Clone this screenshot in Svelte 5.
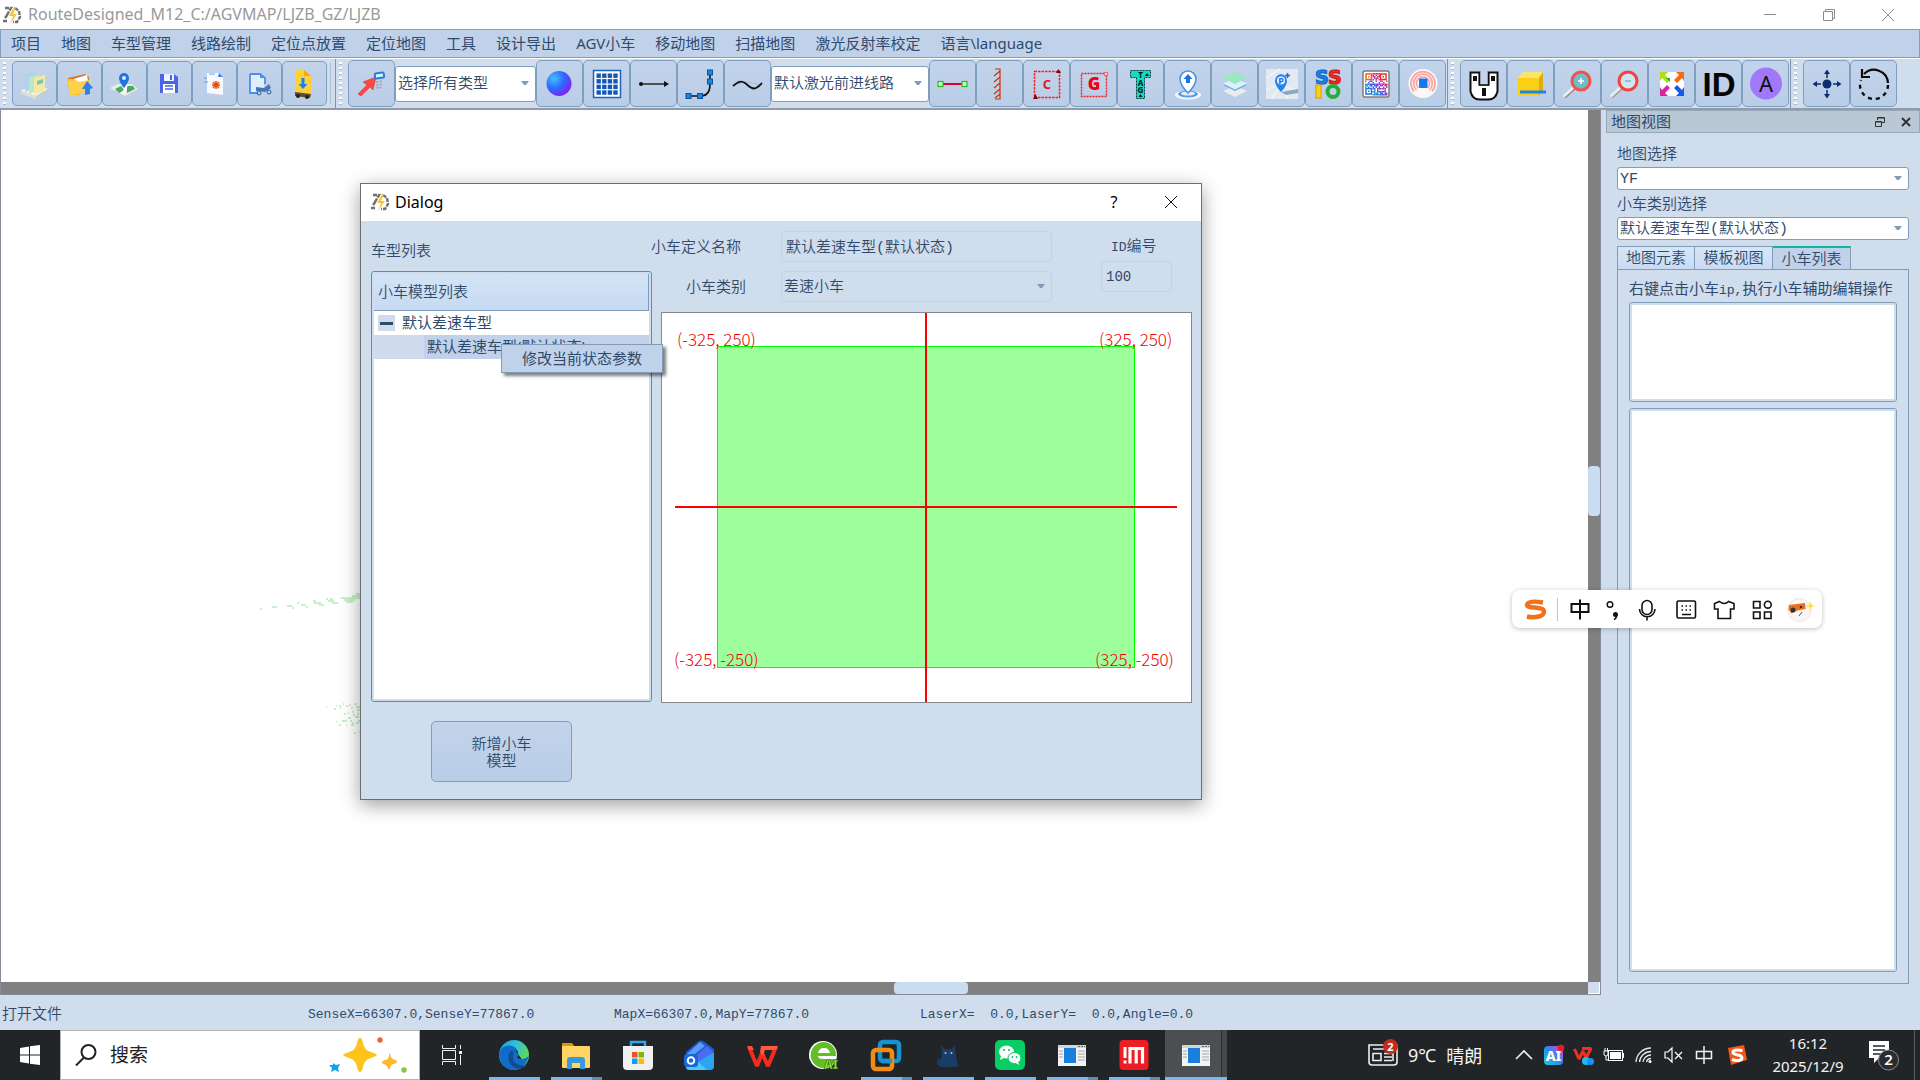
<script lang="ts">
  const menus = ['项目', '地图', '车型管理', '线路绘制', '定位点放置', '定位地图', '工具', '设计导出', 'AGV小车', '移动地图', '扫描地图', '激光反射率校定', '语言\\language'];

  const fileTools = [
    ['打开项目', 'books'], ['打开文件夹', 'folder'], ['打开地图', 'mapPin'], ['保存', 'save'],
    ['激光文件', 'laserFile'], ['车型文件', 'carFile'], ['导出', 'exportFile'],
  ];
  const shapeTools = [['点', 'sphere'], ['网格', 'grid'], ['直线', 'line'], ['折线', 'bend'], ['曲线', 'wave']];
  const mapTools = [
    ['线段', 'segment'], ['反光板', 'hatch'], ['C区域', 'areaC'], ['G区域', 'areaG'], ['标签', 'tag'], ['定位', 'locate'],
    ['图层', 'layers'], ['停车点', 'parking'], ['SSIO', 'ssio'], ['二维码', 'qr'], ['目标', 'target'],
  ];
  const viewTools = [
    ['车体', 'robot'], ['货物', 'box'], ['放大', 'zoomIn'], ['缩小', 'zoomOut'], ['适应窗口', 'fit'], ['编号', 'ident'], ['角度', 'letterA'],
  ];
  const moveTools = [['移动', 'move'], ['旋转', 'rotate']];

  const apps = [
    { name: 'Edge', icon: 'edge', open: 'one' },
    { name: '文件资源管理器', icon: 'explorer', open: 'many' },
    { name: 'Microsoft Store', icon: 'store', open: '' },
    { name: 'Outlook', icon: 'outlook', open: '' },
    { name: 'WPS', icon: 'wps', open: '' },
    { name: '浏览器', icon: 'browser', open: '' },
    { name: 'VMware', icon: 'vmware', open: 'many' },
    { name: '猫', icon: 'cat', open: 'one' },
    { name: '微信', icon: 'wechat', open: 'one' },
    { name: '应用', icon: 'window', open: 'many' },
    { name: 'iM', icon: 'im', open: 'many' },
    { name: 'RouteDesigned', icon: 'window', open: 'active' },
  ];

  const trayIcons = [
    ['显示隐藏的图标', 'chevron'], ['AI', 'ai'], ['WPS云', 'wpsCloud'], ['电池', 'battery'], ['网络', 'wifi'], ['音量', 'mute'], ['输入法', 'zhong'],
  ];

  let grid = '';
  for (let r = 0; r < 4; r++) for (let c = 0; c < 4; c++) grid += `<rect x="${7.5 + c * 5.6}" y="${7.5 + r * 5.6}" width="4.4" height="4.4" fill="#1258b4"/>`;

  let qr = '';
  const qrColors = ['#f4a01c', '#e8402c', '#e02c88', '#9a3cd8', '#3c58e0', '#2890d8', '#28b8a8', '#6ac040'];
  const n = 15;
  for (let r = 0; r < n; r++) for (let c = 0; c < n; c++) {
    const eye = (r < 5 && c < 5) || (r < 5 && c > 9) || (r > 9 && c < 5);
    if (!eye && (r * r * 3 + c * 7 + c * c * r + (r >> 1)) % 7 < 4) {
      qr += `<rect x="${7 + c * 1.5}" y="${7 + r * 1.5}" width="1.5" height="1.5" fill="${qrColors[Math.floor((r + n - c) / 4) % 8]}"/>`;
    }
  }
  qr += '<g fill="none" stroke-width="1.5"><rect x="8" y="8" width="5.500" height="5.500" stroke="#f0641c"/><rect x="22.500" y="8" width="5.500" height="5.500" stroke="#f0302c"/><rect x="8" y="22.500" width="5.500" height="5.500" stroke="#2874d8"/></g><rect x="10" y="10" width="1.500" height="1.500" fill="#f0641c"/><rect x="24.500" y="10" width="1.500" height="1.500" fill="#f0302c"/><rect x="10" y="24.500" width="1.500" height="1.500" fill="#2874d8"/>';

  const icons: Record<string, string> = {
    books: '<path d="M4 25l12-7 15 5-12 7z" fill="#f4f4f0"/><path d="M4 25l15 5v3l-15-5z" fill="#dcdcd8"/><path d="M19 30l12-7v3l-12 7z" fill="#c8ccd0"/><path d="M8 9l10-3v16l-10 4z" fill="#a9d8e8"/><path d="M12 11l10-3v16l-10 4z" fill="#bfe6c4"/><path d="M17 12l11-3v15l-11 5z" fill="#f1e9a4"/><path d="M20 15l6-2v4l-6 2z" fill="#7cc7b0"/>',
    folder: '<path d="M6 12l17-4 4 3v12H7z" fill="#e07820"/><path d="M8 14l17-5 2 12-17 6z" fill="#fff"/><path d="M5 13h7l2 2 3 1 1 13-10 0z" fill="#fbc02c"/><path d="M6 15l2 14 16-3 3-12-11 2-2-2z" fill="#ffd04a"/><path d="M25 15l6 7-3 1 0 5-5 1 0-6-3 0z" fill="#2f80e8"/>',
    mapPin: '<path d="M3 22l8-4 14 0 6 5-13 7z" fill="#e6efe4"/><path d="M8 23l6-3 3 4-5 3zM20 20l6 0 2 3-8 4z" fill="#4ca862"/><path d="M16 28l4-9" stroke="#fff" stroke-width="2"/><path d="M17 7a5 5 0 0 1 5 5c0 4-5 10-5 10s-5-6-5-10a5 5 0 0 1 5-5z" fill="#2474e0"/><circle cx="17" cy="12" r="2" fill="#d8ecff"/>',
    save: '<path d="M8 8h14l4 3v16H8z" fill="#4a64e8"/><rect x="12" y="8" width="10" height="7" fill="#eef2ff"/><rect x="18" y="9" width="2" height="5" fill="#4a64e8"/><rect x="11" y="18" width="12" height="9" fill="#fff"/><path d="M13 20h8M13 23h8" stroke="#4a64e8" stroke-width="1.500"/>',
    laserFile: '<path d="M10 7h12l4 4v18l-16-2z" fill="#f6f9ff"/><path d="M22 7l4 4h-5z" fill="#2f86f0"/><path d="M12 8h6M7 16h4M7 12h3" stroke="#5aa2f4"/><g stroke="#f0702c" stroke-width="2"><path d="M19 15v8M15 19h8M16 16l6 6M22 16l-6 6"/></g><circle cx="19" cy="19" r="2" fill="#d84a20"/>',
    carFile: '<path d="M8 8h10l5 4v6M8 8v19h8" fill="#e2edfc" stroke="#4a8ef0" stroke-width="1.800"/><path d="M9 9h9l4 4v13H9z" fill="#e2edfc"/><path d="M18 7l5 5h-5z" fill="#4a8ef0"/><path d="M14 21l8 1 5-4 2 4-6 4-9-1z" fill="#4676b8"/><circle cx="17" cy="27" r="2" fill="none" stroke="#3d5f96"/><circle cx="27" cy="26" r="2" fill="none" stroke="#3d5f96"/>',
    exportFile: '<path d="M9 4h8l7 6v18H9z" fill="#ffd03a"/><path d="M17 4l7 6h-7z" fill="#f2a81c"/><path d="M14.500 12h3v6h3l-4.500 5-4.500-5h3z" fill="#1684e8"/><path d="M8 26l16 2-1 4-15-2z" fill="#5c4d3e"/><circle cx="11" cy="30" r="2" fill="#222"/><circle cx="20" cy="31" r="2" fill="#222"/>',
    redArrow: '<path d="M4 28l9-9-4-3 13-5-3 13-3-3-9 9z" fill="#ff4a44" stroke="#d83434" stroke-width=".6"/><rect x="21" y="7" width="9" height="5" rx="1" fill="#dff" stroke="#2878e0" stroke-width="2" transform="rotate(-8 25 10)"/><g fill="#a4b0bd"><rect x="22" y="15" width="2.500" height="2"/><rect x="25.500" y="14.500" width="2.500" height="2"/><rect x="22" y="18" width="2.500" height="2"/><rect x="25.500" y="17.500" width="2.500" height="2"/><rect x="22" y="21" width="6" height="1.500"/></g>',
    sphere: '<circle cx="17" cy="17.500" r="12.500" fill="url(#gSphere)"/>',
    grid: `<rect x="4.500" y="4.500" width="27" height="27" fill="#fff" stroke="#1d64bc" stroke-width="1.500"/>${grid}`,
    line: '<path d="M5 18h25" stroke="#333" stroke-width="1.600"/><circle cx="5" cy="18" r="2" fill="#111"/><path d="M28 15l5 3-5 3z" fill="#111"/>',
    bend: '<path d="M7 30h11c7 0 9-5 9-12V6" fill="none" stroke="#111" stroke-width="1.600"/><g fill="#1788e0" stroke="#0a4fa0"><rect x="24.500" y="4" width="5" height="5"/><rect x="24.500" y="13" width="5" height="5"/><rect x="3" y="27.500" width="5" height="5"/><rect x="14.500" y="27.500" width="5" height="5"/></g>',
    wave: '<path d="M8 18q10-4 21 1" fill="none" stroke="#a9b6c4" stroke-width=".8"/><path d="M3 20c5-4 8-6 12-3s7 7 11 5 4-3 6-5" fill="none" stroke="#111" stroke-width="1.800"/>',
    segment: '<path d="M7 18h20" stroke="#e00030" stroke-width="2"/><g fill="#dfeedd" stroke="#12cc12" stroke-width="1.200"><rect x="3" y="15.500" width="5" height="5"/><rect x="27" y="15.500" width="5" height="5"/></g>',
    hatch: '<path d="M13 3h5v30h-5M18 5l-6 5M18 11l-6 5M18 17l-6 5M18 23l-6 5M18 28l-5 4" fill="none" stroke="#cc3300" stroke-width="1.200"/>',
    areaC: '<rect x="5.500" y="5.500" width="25" height="26" fill="none" stroke="#f02020" stroke-width="1.500" stroke-dasharray="2.500 1"/><path d="M27 7h5l-2.500-4zM4 33h5l-2.500-5z" fill="#800010"/><text x="18" y="23" text-anchor="middle" font-family="Noto Sans" font-weight="700" font-size="13" fill="#e01818">C</text>',
    areaG: '<rect x="5.500" y="7.500" width="25" height="23" fill="none" stroke="#f02020" stroke-width="1.400" stroke-dasharray="2 1"/><circle cx="30" cy="8" r="1.800" fill="#f6dfe4" stroke="#f02020" stroke-width=".7"/><text x="18" y="24" text-anchor="middle" font-family="Noto Sans" font-weight="900" font-size="17" fill="#f00010">G</text>',
    tag: '<path d="M7.500 4.500h20v7h-6v21h-8v-21h-6z" fill="#12dcc8" stroke="#063c3c" stroke-dasharray="2 1"/><g font-family="Noto Sans" font-weight="800" font-size="8" text-anchor="middle" fill="#022"><text x="17.500" y="12">T</text><text x="17.500" y="19.500">A</text><text x="17.500" y="27">G</text></g><path d="M22 10l2-3 2 3zM15.500 31l2-3 2 3z" fill="#022"/>',
    locate: '<ellipse cx="18" cy="29" rx="13" ry="4.500" fill="#f4f8fd"/><ellipse cx="18" cy="28" rx="10" ry="3.500" fill="#5c9bea"/><ellipse cx="18" cy="27.500" rx="7" ry="2" fill="#e2eefc"/><path d="M18 5a8 8 0 0 1 8 8c0 6-8 14-8 14s-8-8-8-14a8 8 0 0 1 8-8z" fill="#fff" stroke="#4c92e8" stroke-width="1.600"/><path d="M18 8l4.500 5H20v4h-4v-4h-2.500z" fill="#1c72e0"/>',
    layers: '<path d="M6 25l12-5 12 5-12 6z" fill="#eeece6"/><path d="M6 19l12-5 12 5-12 6z" fill="#5cb4e8"/><path d="M6 17.500l12-5 12 5-12 6z" fill="#dcf0fb"/><path d="M6 12l12-6 12 6-12 6z" fill="#9ae8c0"/>',
    parking: '<rect x="2" y="3" width="32" height="30" fill="#e2e9f1"/><path d="M2 24l12-5 20 5M8 33l8-14 8 14M2 12l14-9" stroke="#eef3f8" stroke-width="1.600" fill="none"/><path d="M17 26l17-3v4l-12 2z" fill="#8ea6c2"/><path d="M17 8a7 7 0 0 1 6 7c0 5-6 11-6 11s-6-6-6-11a7 7 0 0 1 6-7z" fill="#2484f0"/><circle cx="17" cy="14.500" r="4" fill="#eaf4ff"/><text x="17" y="18" text-anchor="middle" font-family="Noto Sans" font-weight="700" font-size="9" fill="#1c6ce0">P</text><path d="M23.500 7v5M21 9.500h5" stroke="#1c6ce0" stroke-width="1.600"/>',
    ssio: '<g font-family="DejaVu Sans" font-weight="700" font-size="19" stroke-width="1.200"><text x="4" y="17.500" fill="#1684e8" stroke="#1468cc">S</text><text x="17" y="17.500" fill="#f02c20" stroke="#d01c18">S</text></g><rect x="5" y="19" width="5" height="13" fill="#ffd012" stroke="#d0a000"/><circle cx="22" cy="25.500" r="5.500" fill="none" stroke="#26ae34" stroke-width="4"/>',
    qr: `<rect x="5" y="5" width="26" height="26" rx="2" fill="#fff" stroke="#807c7c" stroke-width="1.500"/>${qr}`,
    target: '<circle cx="18" cy="17.500" r="14.500" fill="#fdf8f8"/><g fill="none" stroke="#f6a4a4" stroke-width="1.700"><path d="M9 25.500a12 12 0 1 1 18 0M11.500 24a9.300 9.300 0 1 1 13 0M13.500 22a6.500 6.500 0 1 1 9 0"/></g><rect x="14" y="12.500" width="8.500" height="9.500" rx="1" fill="#1478ee"/>',
    robot: '<path d="M4.500 6.500h9v12h9v-12h9v19q-2 8-9 8h-9q-7 0-9-8z" fill="#fff" stroke="#111" stroke-width="2"/><path d="M13.500 6v13h9V6" fill="#c4d4ea" stroke="#111" stroke-width="1.500"/><rect x="7" y="10" width="4" height="5" fill="#111"/><rect x="25" y="10" width="4" height="5" fill="#111"/><rect x="16" y="22" width="4" height="8" fill="#111"/>',
    box: '<path d="M5 12l5-6h20l-4 6z" fill="#fbe36c"/><path d="M5 12h21v18H5z" fill="#fcd012"/><path d="M26 12l4-6v18l-4 6z" fill="#dcae10"/><path d="M7 24.500h26v3H7z" fill="#1c82ec"/>',
    zoomIn: '<path d="M15 21L4 31" stroke="#eee" stroke-width="4"/><path d="M16 22L5 32" stroke="#888" stroke-width="1.500"/><circle cx="21" cy="15" r="9" fill="#6fbccb" stroke="#f0524c" stroke-width="3"/><path d="M21 12v6M18 15h6" stroke="#fff" stroke-width="1.500"/>',
    zoomOut: '<path d="M15 21L4 31" stroke="#eee" stroke-width="4"/><path d="M16 22L5 32" stroke="#999" stroke-width="1.500"/><circle cx="21" cy="15" r="9" fill="#cfe6f2" stroke="#f4423e" stroke-width="3"/><path d="M18 15h6" stroke="#74b8cc" stroke-width="1.500"/>',
    fit: '<rect x="6" y="6" width="24" height="24" fill="#fff"/><path d="M6 6h8l-3 3 5 5-3 3-5-5-2 3z" fill="#b4dc14"/><path d="M12 12l4 4v-4z" fill="#22b040"/><path d="M30 6h-8l3 3-5 5 3 3 5-5 2 3z" fill="#f46a14"/><path d="M6 30h8l-3-3 5-5-3-3-5 5-2-3z" fill="#d826a0"/><path d="M30 30h-8l3-3-5-5 3-3 5 5 2-3z" fill="#1858ee"/>',
    ident: '<text x="18" y="29.500" text-anchor="middle" font-family="Liberation Sans" font-weight="700" font-size="33" fill="#050505">ID</text>',
    letterA: '<circle cx="18" cy="17.500" r="16" fill="#a078fa"/><text x="18" y="26" text-anchor="middle" font-family="Noto Sans" font-size="22" fill="#111">A</text>',
    move: '<circle cx="18" cy="18" r="4.500" fill="#0c2c70"/><path d="M18 12V7M18 24v5M12 18H7M24 18h5" stroke="#0c2c70" stroke-width="1.500"/><path d="M15 8L18 3.500 21 8zM15 28l3 4.500 3-4.500zM8 15L3.500 18 8 21zM28 15l4.500 3-4.500 3z" fill="#0c2c70"/>',
    rotate: '<path d="M8 8a14 14 0 0 1 24 9" fill="none" stroke="#0a0a0a" stroke-width="2.200"/><path d="M32 19a14 14 0 0 1-28 0 14 14 0 0 1 1-5" fill="none" stroke="#0a0a0a" stroke-width="2.400" stroke-dasharray="4 4"/><path d="M6 3v8h8" fill="none" stroke="#0a0a0a" stroke-width="2.200"/>',

    edge: '<circle cx="18" cy="18" r="15" fill="url(#gEdge)"/><path d="M3.200 17c1-7 8-9.500 13-8 5 1.500 7 6 5.500 9.500-1 1.800.5 3.500 4 3.500 3 0 6-1.500 7-4-.5 8-7 15-15 15C10 33 3 26 3.200 17z" fill="#0f6cc8"/><path d="M15 14c-4 3-4 13 5 17 4 1.500 8 0 10.500-3-6 2-13-1-13.500-7 0-3 .7-4 0-7z" fill="#154a90"/><path d="M19 13c3 1 4 4 2.600 6-1 1.800.5 3.300 4 3" fill="#222629"/>',
    explorer: '<path d="M4 7q0-1 1-1h9l3 4H4z" fill="#e0940c"/><rect x="4" y="9" width="28" height="22" rx="1" fill="#ffd666"/><path d="M9 32v-9q0-3 3-3h12q3 0 3 3v9h-5v-6h-8v6z" fill="#3c98dc"/>',
    store: '<path d="M11 11V5h14v6" fill="none" stroke="#28a8ee" stroke-width="2.500"/><path d="M3 9h30v20q0 4-4 4H7q-4 0-4-4z" fill="#f0f0f0"/><rect x="12" y="15" width="5.500" height="5.500" fill="#f25022"/><rect x="18.500" y="15" width="5.500" height="5.500" fill="#7fba00"/><rect x="12" y="21.500" width="5.500" height="5.500" fill="#00a4ef"/><rect x="18.500" y="21.500" width="5.500" height="5.500" fill="#ffb900"/>',
    outlook: '<path d="M4 15L17 4q2-1 4 0l11 8v17q0 4-4 4H8q-4 0-4-4z" fill="#1a5cd8"/><path d="M5 17L18 5l5 4L8 21z" fill="#5a9cf8"/><path d="M10 22L25 9l6 6-14 12z" fill="#4c6cf0"/><path d="M16 25l16-10v14q0 4-4 4H9z" fill="#2ca4f4"/><path d="M4 30l12-5 9 8H8q-4 0-4-3z" fill="#4cc8fa"/><rect x="2" y="17" width="14" height="13" rx="3" fill="#1668d8"/><circle cx="9" cy="23.500" r="3.300" fill="none" stroke="#fff" stroke-width="2"/>',
    wps: '<path d="M5 10l8 19 5-13 6 13 8-19" fill="none" stroke="#f42c20" stroke-width="4" stroke-linejoin="bevel"/><path d="M17 9h17l-2 4H21l-2 6-3-4z" fill="#ff5a40"/><path d="M3 9h5l2 4H5z" fill="#ff4a34"/>',
    browser: '<circle cx="17" cy="18" r="14" fill="#fff"/><path d="M18 5a13 13 0 1 0 12 17H17q-5 0-5-3h18A13 13 0 0 0 18 5z" fill="#62be26"/><path d="M12 16q1-5 6-5t6 5z" fill="#fff"/><text x="18" y="32" font-family="Noto Sans" font-weight="900" font-size="12" fill="#8ce43c" stroke="#24510c" stroke-width=".5">AI</text>',
    vmware: '<rect x="12" y="5" width="19" height="19" rx="3" fill="none" stroke="#1494d4" stroke-width="4.500"/><rect x="5" y="13" width="19" height="19" rx="3" fill="none" stroke="#f28c14" stroke-width="4.500"/><path d="M14 24h10" stroke="#1494d4" stroke-width="4.500"/>',
    cat: '<path d="M11 8l3 4h8l3-4 1 11 2 9q0 2-2 2H11q-2 0-2-2 0-5 3-9z" fill="#1c3c68"/><path d="M9 28q-2-3 0-6" stroke="#1c3c68" stroke-width="2" fill="none"/><circle cx="15.500" cy="16" r="1" fill="#a8c4e4"/><circle cx="21.500" cy="16" r="1" fill="#a8c4e4"/>',
    wechat: '<rect x="3" y="3" width="30" height="30" rx="5" fill="#08cc64"/><ellipse cx="14.500" cy="15" rx="7.500" ry="6.500" fill="#fff"/><ellipse cx="22.500" cy="21" rx="6.500" ry="5.500" fill="#fff" stroke="#08cc64"/><path d="M9 19l-1 4 4-2zM26 25l1.500 3-4-2z" fill="#fff"/><g fill="#08b45a"><circle cx="12" cy="13" r="1"/><circle cx="17" cy="13" r="1"/><circle cx="20.500" cy="20" r=".9"/><circle cx="24.500" cy="20" r=".9"/></g>',
    window: '<rect x="4" y="8" width="28" height="21" fill="#f3f3f3"/><path d="M4 8h28v3H4z" fill="#d4d4d4"/><rect x="10" y="11" width="12" height="15" fill="#1680dc"/><path d="M5 14h4M5 17h4M5 20h4M24 14h7M24 17h7M24 20h7M24 23h7" stroke="#a4a4a4"/><path d="M24 9.500h2M27 9.500h2M30 9.500h1" stroke="#666"/>',
    im: '<rect x="3.500" y="3" width="29" height="30" rx="4" fill="#f01c24"/><path d="M9 10v11M9 23.500v3" stroke="#fff" stroke-width="3"/><path d="M14 26.500V11.500h12.500v15M20.200 12v14.500" stroke="#fff" stroke-width="3.200" fill="none"/>',

    chevron: '<path d="M10 22l8-8 8 8" fill="none" stroke="#f0f0f0" stroke-width="1.600"/>',
    ai: '<rect x="8" y="9" width="19" height="19" rx="4" fill="url(#gAi)"/><text x="17.500" y="24" text-anchor="middle" font-family="Noto Sans" font-weight="800" font-size="14" fill="#fff">AI</text><circle cx="25" cy="11" r="3.300" fill="#f01828"/>',
    wpsCloud: '<path d="M8.500 12l4.500 10 4-8 3 7 5-9.500h-9" fill="none" stroke="#f03024" stroke-width="3" stroke-linejoin="bevel"/><circle cx="20" cy="24" r="4" fill="#22b8f0"/><circle cx="24.500" cy="24.500" r="3.500" fill="#1890f0"/>',
    battery: '<rect x="12.500" y="13.500" width="14" height="10" fill="none" stroke="#fff"/><rect x="14" y="15" width="11" height="7" fill="#fff"/><path d="M27.500 16v5M8 14v3q0 2 2 2t2-2v-3zM9 11v3M11.500 11v3M10 19v4h3" stroke="#fff" fill="none"/>',
    wifi: '<g fill="none" stroke="#e8e8e8" stroke-width="1.300"><path d="M10 25A15 15 0 0 1 25 11"/><path d="M13.500 25A11.500 11.500 0 0 1 25 14.500"/><path d="M17 25a8 8 0 0 1 8-7"/><path d="M20.500 25a4.500 4.500 0 0 1 4.500-3.500"/></g><circle cx="24" cy="24.500" r="1.500" fill="#fff"/>',
    mute: '<path d="M9 15h3l4-4v14l-4-4H9z" fill="none" stroke="#fff" stroke-width="1.200"/><path d="M19 15l7 7M26 15l-7 7" stroke="#fff" stroke-width="1.200"/>',
    zhong: '<path d="M10.500 14.500h15v7h-15zM18 9v18" fill="none" stroke="#f2f2f2" stroke-width="1.500"/>',
  };

  // point cloud left by the laser scan: x, y, width
  const specks = [
    [260, 608, 2], [272, 606, 5], [287, 605, 5], [292, 607, 2], [297, 602, 2], [301, 604, 5], [306, 606, 2], [313, 600, 3], [314, 602, 7], [319, 604, 5],
    [326, 598, 2], [328, 600, 6], [330, 598, 3], [332, 602, 6], [341, 597, 12], [344, 599, 11], [346, 601, 7], [352, 595, 8], [356, 593, 4], [353, 597, 7],
    [326, 706, 1], [334, 708, 2], [336, 705, 1], [339, 705, 2], [340, 707, 1], [343, 703, 1], [344, 713, 2], [346, 705, 2], [349, 704, 2], [351, 707, 2],
    [354, 703, 3], [356, 706, 4], [357, 709, 3], [352, 711, 2], [348, 712, 1], [353, 714, 2], [348, 717, 3], [355, 716, 4], [357, 713, 2], [350, 720, 2],
    [342, 720, 5], [336, 721, 1], [339, 724, 2], [346, 724, 1], [351, 724, 3], [356, 722, 3], [358, 720, 2], [354, 732, 2], [359, 731, 1], [352, 722, 2],
  ];
</script>

{#snippet pic(name: string)}
  <svg class="pic" viewBox="0 0 36 36" aria-hidden="true">{@html icons[name]}</svg>
{/snippet}

{#snippet logo()}
  <svg class="logo" viewBox="0 0 20 18" aria-hidden="true">
    <path d="M3 2h6l-4 7M1 15h5M3 12l3-4M13 2l4 3 1 6-3 5h-4" fill="none" stroke="#707070" stroke-width="2.400" stroke-dasharray="4 1" />
    <path d="M12 1L7 10h4l-3 8 7-10h-4l3-7z" fill="#f2c640" />
  </svg>
{/snippet}

{#snippet tools(list: string[][])}
  {#each list as [label, icon]}
    <button class="tool" aria-label={label}>{@render pic(icon)}</button>
  {/each}
{/snippet}

{#snippet arrow()}
  <svg class="arrow" viewBox="0 0 8 5" aria-hidden="true"><path d="M0 0h8L5 4H3z" fill="#7f9db9" /></svg>
{/snippet}

<svg class="defs" aria-hidden="true">
  <defs>
    <radialGradient id="gSphere" cx=".3" cy=".3" r=".8"><stop offset="0" stop-color="#45c0ff" /><stop offset=".5" stop-color="#2a6cff" /><stop offset="1" stop-color="#8a18f0" /></radialGradient>
    <linearGradient id="gEdge" x1="0" y1="0" x2="1" y2="0.500"><stop offset="0" stop-color="#1c9ce0" /><stop offset=".5" stop-color="#30c0dc" /><stop offset="1" stop-color="#64dc50" /></linearGradient>
    <linearGradient id="gAi" x1="0" y1="1" x2="1" y2="0"><stop offset="0" stop-color="#14d4d8" /><stop offset=".5" stop-color="#2c88f0" /><stop offset="1" stop-color="#e040d0" /></linearGradient>
  </defs>
</svg>

<div class="desktop">
  <header class="titlebar">
    {@render logo()}
    <h1>RouteDesigned_M12_C:/AGVMAP/LJZB_GZ/LJZB</h1>
    <div class="winbtns">
      <button aria-label="最小化"><svg viewBox="0 0 12 12"><path d="M0 5.500h12" /></svg></button>
      <button aria-label="还原"><svg viewBox="0 0 12 12"><path d="M.5 2.500h9v9h-9zM2.500 2.500v-2h9v9h-2" /></svg></button>
      <button aria-label="关闭"><svg viewBox="0 0 12 12"><path d="M0 0l12 12M12 0L0 12" /></svg></button>
    </div>
  </header>

  <nav class="menubar">
    {#each menus as m}<button>{m}</button>{/each}
  </nav>

  <div class="toolbar">
    <div class="group small">
      <i class="grip"></i>
      {@render tools(fileTools)}
      <i class="sep"></i>
    </div>
    <div class="group">
      <i class="grip"></i>
      {@render tools([['选择', 'redArrow']])}
      <div class="combo tall type"><select aria-label="类型"><option>选择所有类型</option></select>{@render arrow()}</div>
      {@render tools(shapeTools)}
      <div class="combo tall route"><select aria-label="线路"><option>默认激光前进线路</option></select>{@render arrow()}</div>
      {@render tools(mapTools)}
    </div>
    <div class="group">
      <i class="grip"></i>
      {@render tools(viewTools)}
    </div>
    <div class="group last">
      <i class="grip"></i>
      {@render tools(moveTools)}
    </div>
  </div>

  <main>
    <section class="view">
      <div class="canvas"></div>
      <div class="vscroll"><i></i></div>
      <div class="hscroll"><i></i></div>
      <div class="corner"></div>
    </section>

    <aside class="dock">
      <div class="docktitle">
        <h2>地图视图</h2>
        <button aria-label="浮动"><svg viewBox="0 0 12 12"><path d="M3.500 4V1.500h7v5H8M3.500 2h7M1.500 5.500h6v5h-6zM1.500 6h6" /></svg></button>
        <button aria-label="关闭"><svg viewBox="0 0 12 12"><path d="M2 2l8 8M10 2l-8 8" /></svg></button>
      </div>
      <div class="dockbody">
        <label for="map">地图选择</label>
        <div class="combo"><select id="map"><option>YF</option></select>{@render arrow()}</div>
        <label for="kind">小车类别选择</label>
        <div class="combo"><select id="kind"><option>默认差速车型(默认状态)</option></select>{@render arrow()}</div>
        <div class="tabs" role="tablist">
          <button role="tab" aria-selected="false">地图元素</button>
          <button role="tab" aria-selected="false">模板视图</button>
          <button role="tab" aria-selected="true" class="on">小车列表</button>
        </div>
        <div class="panel">
          <p>右键点击小车<span class="mono">ip,</span>执行小车辅助编辑操作</p>
          <div class="list short"></div>
          <div class="list"></div>
        </div>
      </div>
    </aside>
  </main>

  <footer class="status">
    <span>打开文件</span>
    <span class="mono">SenseX=66307.0,SenseY=77867.0</span>
    <span class="mono">MapX=66307.0,MapY=77867.0</span>
    <span class="mono">LaserX=  0.0,LaserY=  0.0,Angle=0.0</span>
  </footer>

  <div class="taskbar">
    <button class="start" aria-label="开始"><svg viewBox="0 0 20 20"><path d="M0 3l9-1.500V9.500H0zM10 1.300L20 0v9.500H10zM0 10.500h9v8L0 17zM10 10.500h10V20l-10-1.300z" fill="#fff" /></svg></button>
    <label class="search">
      <svg class="lens" viewBox="0 0 22 22"><circle cx="13.500" cy="8" r="7" /><path d="M9 13.500L1 21.500" /></svg>
      <input type="text" placeholder="搜索" aria-label="搜索" />
      <svg class="spark" viewBox="0 0 78 36">
        <path d="M31 1q2 0 3 5 1 7 8 9 6 2 6 3t-6 3q-7 2-8 9-1 5-3 5t-3-5q-1-7-8-9-6-2-6-3t6-3q7-2 8-9 1-5 3-5z" fill="#fcc41c" />
        <path d="M60 16q1 0 2 4 1 2 4 3t2 2q0 1-3 2-3 0-4 4t-2 0q-1-3-4-4t-2-2q0-1 3-2 3 0 4-4z" fill="#ffb82c" />
        <path d="M4 26l3 2 4-1-2 4 1 4-4-2-4 2 1-4-3-3 4 0z" fill="#10a4ec" />
        <circle cx="51" cy="3" r="2.700" fill="#ee6430" /><circle cx="75" cy="33" r="2.700" fill="#80c83c" />
      </svg>
    </label>
    <button class="taskview" aria-label="任务视图"><svg viewBox="0 0 20 20"><path d="M.5 0v3.500h13V0M.5 20v-3.500h13V20M.5 5.500h13v9H.5zM18.500 0v4M18.500 10v10" /><path d="M17 6h3v3h-3z" fill="#f0f0f0" stroke="none" /></svg></button>
    {#each apps as a}
      <button class="app {a.open}" aria-label={a.name}>{@render pic(a.icon)}</button>
    {/each}

    <div class="tray">
      <button class="weather">
        <span class="news"><svg viewBox="0 0 30 22"><path d="M1 1h28v17q0 3-3 3H4q-3 0-3-3zM5 5h16M5 9.500h8v7H5zM16 9.500h8M16 13h8M16 16.500h8M25 5v12" /></svg><b>2</b></span>
        <span>9℃</span><span>晴朗</span>
      </button>
      {#each trayIcons as [label, icon]}
        <button class="ti" aria-label={label}>{@render pic(icon)}</button>
      {/each}
      <button class="sogou" aria-label="搜狗输入法"><svg viewBox="0 0 20 20"><path d="M1 3l16-3 3 15-16 5z" fill="#f0581c" /><path d="M15.500 5.500Q6 4 6 7.500c0 3 9 1.500 9 5.500 0 3-6 3-10 1.500" fill="none" stroke="#fff" stroke-width="3" /></svg></button>
      <button class="clock"><span>16:12</span><span>2025/12/9</span></button>
      <button class="notes" aria-label="通知"><svg viewBox="0 0 32 32"><path d="M1 2h20v17H11l-5 5v-5H1z" fill="#fff" /><path d="M5 7h12M5 11h12M5 15h8" stroke="#25292c" stroke-width="1.300" /><circle cx="20.500" cy="21" r="10" fill="#2a2d30" stroke="#8a8c8e" /><text x="20.500" y="26" text-anchor="middle" font-size="15" font-weight="600" fill="#fff">2</text></svg></button>
      <i class="peek"></i>
    </div>
  </div>
</div>

<svg class="cloud" viewBox="250 580 112 160" aria-hidden="true">
  {#each specks as [x, y, w]}<rect {x} {y} width={w} height="2" fill="#c8f0c8" />{/each}
</svg>

<div class="dialog" role="dialog" aria-label="Dialog">
  <header>
    {@render logo()}
    <h2>Dialog</h2>
    <button class="help" aria-label="帮助">?</button>
    <button class="close" aria-label="关闭"><svg viewBox="0 0 12 12"><path d="M0 0l12 12M12 0L0 12" /></svg></button>
  </header>
  <div class="body">
    <div class="left">
      <p class="caption">车型列表</p>
      <div class="tree">
        <div class="treehead">小车模型列表</div>
        <ul>
          <li><button class="minus" aria-label="折叠"></button><span>默认差速车型</span></li>
          <li class="sel"><span>默认差速车型(默认状态)</span></li>
        </ul>
      </div>
      <button class="add">新增小车<br />模型</button>
    </div>
    <div class="right">
      <form>
        <div class="fields">
          <label class="wide" for="fname">小车定义名称</label>
          <input id="fname" type="text" value="默认差速车型(默认状态)" readonly />
          <label for="fkind">小车类别</label>
          <div class="combo flat"><select id="fkind"><option>差速小车</option></select>{@render arrow()}</div>
        </div>
        <div class="ident">
          <label for="fid"><span class="mono">ID</span>编号</label>
          <input id="fid" class="mono" type="text" value="100" readonly />
        </div>
      </form>
      <svg class="plot" viewBox="0 0 529 389">
        <rect x="55.500" y="33.500" width="417" height="321" fill="#9cff9c" stroke="#00ff00" />
        <path d="M264 0v389M13 194h502" stroke="#ff0000" stroke-width="2" />
        <g fill="#f00000">
          <text x="15" y="33">(-325, 250)</text><text x="437" y="33">(325, 250)</text>
          <text x="12" y="353">(-325, -250)</text><text x="433" y="353">(325, -250)</text>
        </g>
      </svg>
    </div>
  </div>
</div>

<div class="context" role="menu"><button role="menuitem">修改当前状态参数</button></div>

<div class="ime">
  <svg viewBox="0 0 310 38">
    <path d="M31 12.500Q16 10 15 15c0 4 17 1 17 6.500 0 6-11 6.500-17 5" fill="none" stroke="#f0721c" stroke-width="4.500" />
    <path d="M45.500 8v23" stroke="#c4c4c4" />
    <g fill="none" stroke="#111" stroke-width="2">
      <path d="M59.500 14h17v8h-17zM68 9.500v20" />
      <circle cx="98" cy="14.500" r="2.800" stroke-width="1.400" />
      <path d="M104 24.500q1.500 3-2 5" stroke-width="1.500" />
      <g stroke-width="1.600"><rect x="130" y="10.500" width="10" height="14" rx="5" /><path d="M127.500 19a7.500 7.500 0 0 0 15.500 0M135 27v3.500" />
      <rect x="165" y="11" width="18.500" height="17" rx="1.500" /><path d="M170 24.500h9M169.500 16h1.500M173.500 16h1.500M177.500 16h1.500M169.500 20h1.500M173.500 20h1.500M177.500 20h1.500" />
      <path d="M207.500 11.500q5 4 9 0l5.500 2v5.500h-3.500v9.500h-12.500v-9.500h-3.500V13.500z" />
      <path d="M241.500 11.500h6.500v6.500h-6.500zM241.500 22h6.500v6.500h-6.500zM252.500 22h6.500v6.500h-6.500z" /><circle cx="255.800" cy="14.700" r="3.400" /></g>
    </g>
    <circle cx="103.500" cy="24.500" r="2.500" fill="#111" />
    <circle cx="287.500" cy="20" r="11.500" fill="#fbf6f6" stroke="#f3e0de" /><path d="M277 15l16-2 .5 6-8 1.500-6 3-3-4z" fill="#ee6e20" /><circle cx="281" cy="20" r="2.500" fill="#333" /><circle cx="289" cy="17" r="1.300" fill="#333" /><path d="M290 22l-3 4" stroke="#555" /><path d="M298.500 11l1 4 3.500 1-3.500 1-1 4-1-4-3.500-1 3.500-1z" fill="#ffdc30" />
  </svg>
</div>

<style>
  :global(*) { box-sizing: border-box; }
  :global(body) {
    margin: 0;
    overflow: hidden;
    font-family: 'Noto Sans', 'Noto Sans CJK SC', sans-serif;
    font-size: 15px;
    color: #2f4a6b;
  }
  button, input, select { font: inherit; color: inherit; margin: 0; padding: 0; border: 0; background: none; border-radius: 0; outline: 0; }
  h1, h2, p, ul { margin: 0; padding: 0; font-weight: 400; }
  svg { display: block; }
  .defs { position: absolute; width: 0; height: 0; }
  .mono { font-family: 'Liberation Mono', monospace; font-size: 13px; }
  .pic { width: 36px; height: 36px; flex: none; overflow: visible; }
  .logo { width: 20px; height: 18px; }

  .combo, .dockbody, .status, .caption, .treehead, .add, form, form input { font-weight: 350; }

  .desktop { display: flex; flex-direction: column; height: 100vh; background: #d0dded; }
  .titlebar { flex: none; height: 29px; display: flex; align-items: center; gap: 6px; padding: 0 3px 0 2px; background: #fff; }
  .titlebar h1 { flex: 1; font-size: 16px; line-height: 29px; color: #999; }
  .winbtns { display: flex; }
  .winbtns button { width: 59px; display: flex; justify-content: center; }
  .winbtns svg, .close svg { width: 12px; height: 12px; fill: none; stroke: #8c8c8c; }

  .menubar { flex: none; height: 29px; display: flex; background: #c0d2ea; border: 1px solid #7f9fc0; }
  .menubar button { padding: 0 10px; line-height: 27px; white-space: nowrap; }

  .toolbar { flex: none; height: 52px; display: flex; border-top: 1px solid #fff; border-bottom: 2px solid #8f9baa; }
  .group { display: flex; align-items: center; padding-right: 1px; border-right: 1px solid #7f93aa; }
  .group.small { padding-right: 4px; }
  .group.last { border: 0; }
  .grip { width: 3px; height: 43px; margin: 0 6px 0 3px; background: repeating-linear-gradient(#fff 0 2px, #a9b8ca 2px 3px, transparent 3px 5px); }
  .sep { width: 1px; height: 41px; margin-left: 3px; background: #b2bfce; }
  .tool { width: 47px; height: 47px; flex: none; display: grid; place-items: center; border: 1px solid #7f9fc0; border-radius: 5px; background: linear-gradient(#c2d4eb, #bacde7); }
  .small .tool { width: 45px; height: 45px; }

  .combo { display: grid; align-items: center; height: 23px; border: 1px solid #7f9db9; border-radius: 3px; background: #fff; }
  .combo select { grid-area: 1 / 1; width: 100%; height: 100%; padding: 2px 20px 0 2px; appearance: none; font-family: 'Liberation Mono', 'Noto Sans CJK SC', monospace; }
  .arrow { grid-area: 1 / 1; justify-self: end; width: 8px; height: 5px; margin-right: 6px; pointer-events: none; }
  .tall { height: 36px; }
  .type { width: 141px; }
  .route { width: 158px; }

  main { flex: 1; min-height: 0; display: flex; gap: 5px; }
  .view { flex: 1; display: grid; grid-template: 1fr 12px / 1fr 12px; border: 1px solid #878c98; border-top: 0; background: #808080; }
  .canvas { background: #fff; }
  .vscroll { display: grid; align-items: start; }
  .vscroll i { height: 50px; margin-top: 356px; border-radius: 4px; background: #cadcf2; }
  .hscroll i { display: block; width: 74px; height: 12px; margin-left: 893px; border-radius: 4px; background: #cadcf2; }
  .corner { background: #d0dded; border: solid #fff; border-width: 0 1px 1px 0; }

  .dock { width: 314px; display: flex; flex-direction: column; }
  .docktitle { height: 23px; display: flex; align-items: center; gap: 14px; padding: 0 7px 0 4px; background: #bac7d5; border: 1px solid #99a8b8; }
  .docktitle h2 { flex: 1; font-size: 15px; line-height: 21px; }
  .docktitle svg { width: 12px; height: 12px; fill: none; stroke: #333; stroke-width: 2; }
  .docktitle button:first-of-type svg { stroke-width: 1; }
  .dockbody { flex: 1; display: flex; flex-direction: column; padding: 8px 11px 11px; }
  .dockbody label { height: 26px; line-height: 24px; }
  .combo + label { margin-top: 1px; }
  .tabs { display: flex; height: 23px; margin-top: 6px; }
  .tabs button { width: 78px; padding-bottom: 2px; line-height: 18px; border: 1px solid #7f9db9; border-bottom: 0; background: linear-gradient(#d6e6f7, #c8dbf2); }
  .tabs button + button { border-left: 0; }
  .tabs .on { border-top: 2px solid #12b5a0; background: #c0d1e9; }
  .panel { flex: 1; display: flex; flex-direction: column; gap: 6px; padding: 0 11px 11px; border: 1px solid #7f9db9; }
  .panel p { height: 26px; line-height: 36px; white-space: nowrap; }
  .list { flex: 1; border: 1px solid #7f9db9; border-radius: 3px; background: #fff; box-shadow: inset 0 0 0 2px #d0dded; }
  .short { flex: none; height: 100px; }

  .status { flex: none; height: 35px; display: grid; grid-template-columns: 306px 306px 306px 1fr; align-items: center; padding-left: 2px; white-space: pre; }
  .status .mono { padding-top: 3px; }

  .taskbar { flex: none; height: 50px; display: flex; background: #222528; color: #f4f4f4; }
  .start { width: 60px; display: grid; place-items: center; }
  .start svg { width: 20px; height: 20px; }
  .search { width: 360px; display: flex; align-items: center; gap: 13px; padding: 0 12px 0 14px; background: #fff; border: 1px solid #b4b4b4; }
  .search input { flex: 1; min-width: 0; font-size: 19px; }
  .search input::placeholder { color: #222; opacity: 1; }
  .lens { width: 22px; height: 22px; fill: none; stroke: #222; stroke-width: 2; }
  .spark { width: 78px; height: 36px; }
  .taskview { width: 63px; display: grid; place-items: center; }
  .taskview svg { width: 20px; height: 20px; fill: none; stroke: #f0f0f0; stroke-width: 1; overflow: visible; }
  .app { width: 62px; display: grid; place-items: center; }
  .one { background: linear-gradient(#76b9ed, #76b9ed) 50% 100% / 51px 3px no-repeat; }
  .many { background: linear-gradient(90deg, #76b9ed 41px, #5b8cb2 41px) 50% 100% / 51px 3px no-repeat; }
  .active { background: linear-gradient(#76b9ed, #76b9ed) 0 100% / 100% 3px no-repeat, linear-gradient(90deg, #4b4f52 56px, #2b2f32 56px 57px, #45494c 57px); }
  .tray { margin-left: auto; display: flex; align-items: stretch; }
  .weather { width: 148px; display: flex; align-items: center; gap: 10px; padding-left: 10px; font-size: 18px; white-space: nowrap; }
  .news { display: grid; width: 30px; }
  .news svg { grid-area: 1 / 1; width: 30px; height: 22px; fill: none; stroke: #eee; stroke-width: 1.6; }
  .news b { grid-area: 1 / 1; place-self: start end; width: 15px; height: 15px; margin-top: -5px; border-radius: 50%; background: #c42b1c; color: #fff; font-size: 11px; line-height: 15px; text-align: center; }
  .ti { width: 30px; display: grid; place-items: center; }
  .sogou { width: 42px; display: grid; place-items: center; }
  .sogou svg { width: 20px; height: 20px; }
  .clock { width: 100px; display: flex; flex-direction: column; justify-content: center; align-items: center; font-size: 15px; line-height: 23px; }
  .notes { width: 56px; padding-right: 5px; display: grid; place-items: center; }
  .notes svg { width: 32px; height: 32px; }
  .peek { width: 6px; border-left: 1px solid #5a5d60; }

  .cloud { position: absolute; left: 250px; top: 580px; width: 112px; height: 160px; }

  .dialog { position: absolute; left: 360px; top: 183px; width: 842px; background: #d0dded; border: 1px solid #6c6f74; box-shadow: 0 5px 18px rgba(0, 0, 0, 0.38); }
  .dialog header { height: 37px; display: flex; align-items: center; gap: 5px; padding: 0 24px 2px 9px; background: #fff; color: #000; }
  .dialog h2 { flex: 1; font-size: 16px; }
  .help { width: 20px; font-size: 16px; }
  .close { margin-left: 36px; }
  .close svg { stroke: #111; }
  .body { display: flex; gap: 9px; padding: 0 8px 17px 10px; }
  .left { flex: none; width: 281px; display: flex; flex-direction: column; }
  .caption { height: 50px; padding-top: 10px; line-height: 38px; }
  .tree { height: 431px; padding: 2px; border: 1px solid #12b5a0; border-radius: 3px; background: #fff; box-shadow: inset 0 0 0 2px #d0dded; }
  .treehead { height: 37px; padding-left: 4px; line-height: 34px; border: solid #7f9db9; border-width: 0 1px 1px 0; background: linear-gradient(#d3e4f6, #c6daf2); }
  .tree ul { list-style: none; }
  .tree li { display: flex; align-items: center; height: 24px; padding-left: 4px; gap: 7px; }
  .tree li span { height: 24px; line-height: 22px; }
  .tree .sel { padding-left: 50px; background: #d0dcee; }
  .tree .sel span { flex: 1; padding-left: 3px; background: #c0d1e9; }
  .minus { width: 17px; height: 16px; background: linear-gradient(#2f4a6b, #2f4a6b) 50% 50% / 13px 3px no-repeat #d0dcee; }
  .add { width: 141px; height: 61px; margin: 19px 0 0 60px; line-height: 17px; border: 1px solid #7f9fc0; border-radius: 5px; background: linear-gradient(#c2d4eb, #bacde7); }
  .right { flex: 1; min-width: 0; }
  form { display: flex; height: 91px; padding-top: 10px; }
  .fields { display: grid; grid-template: 31px 31px / 85px 271px; gap: 9px 35px; }
  .fields label { display: flex; align-items: center; justify-content: flex-end; padding-bottom: 2px; white-space: nowrap; }
  .fields .wide { padding-right: 5px; }
  form input, .flat { height: 31px; border: 1px solid #c1d2e9; border-radius: 4px; background: none; }
  form input { padding: 0 4px 1px; font-family: 'Liberation Mono', 'Noto Sans CJK SC', monospace; }
  .ident { width: 71px; margin-left: 49px; display: flex; flex-direction: column; }
  .ident label { height: 30px; padding-left: 10px; line-height: 29px; white-space: nowrap; }
  .ident input { width: 100%; padding: 0 4px; font-size: 14px; }
  .plot { width: 531px; height: 391px; border: 1px solid #828790; background: #fff; font-family: 'Noto Sans CJK SC', sans-serif; font-weight: 300; font-size: 17px; }

  .context { position: absolute; left: 501px; top: 344px; width: 162px; background: #c0d2ea; border: 1px solid #7f9db9; box-shadow: 3px 3px 3px rgba(0, 0, 0, 0.5); }
  .context button { width: 100%; padding-left: 20px; line-height: 27px; text-align: left; }

  .ime { position: absolute; left: 1512px; top: 590px; width: 310px; height: 38px; border-radius: 8px; background: #fff; box-shadow: 0 1px 5px rgba(0, 0, 0, 0.25); }
</style>
